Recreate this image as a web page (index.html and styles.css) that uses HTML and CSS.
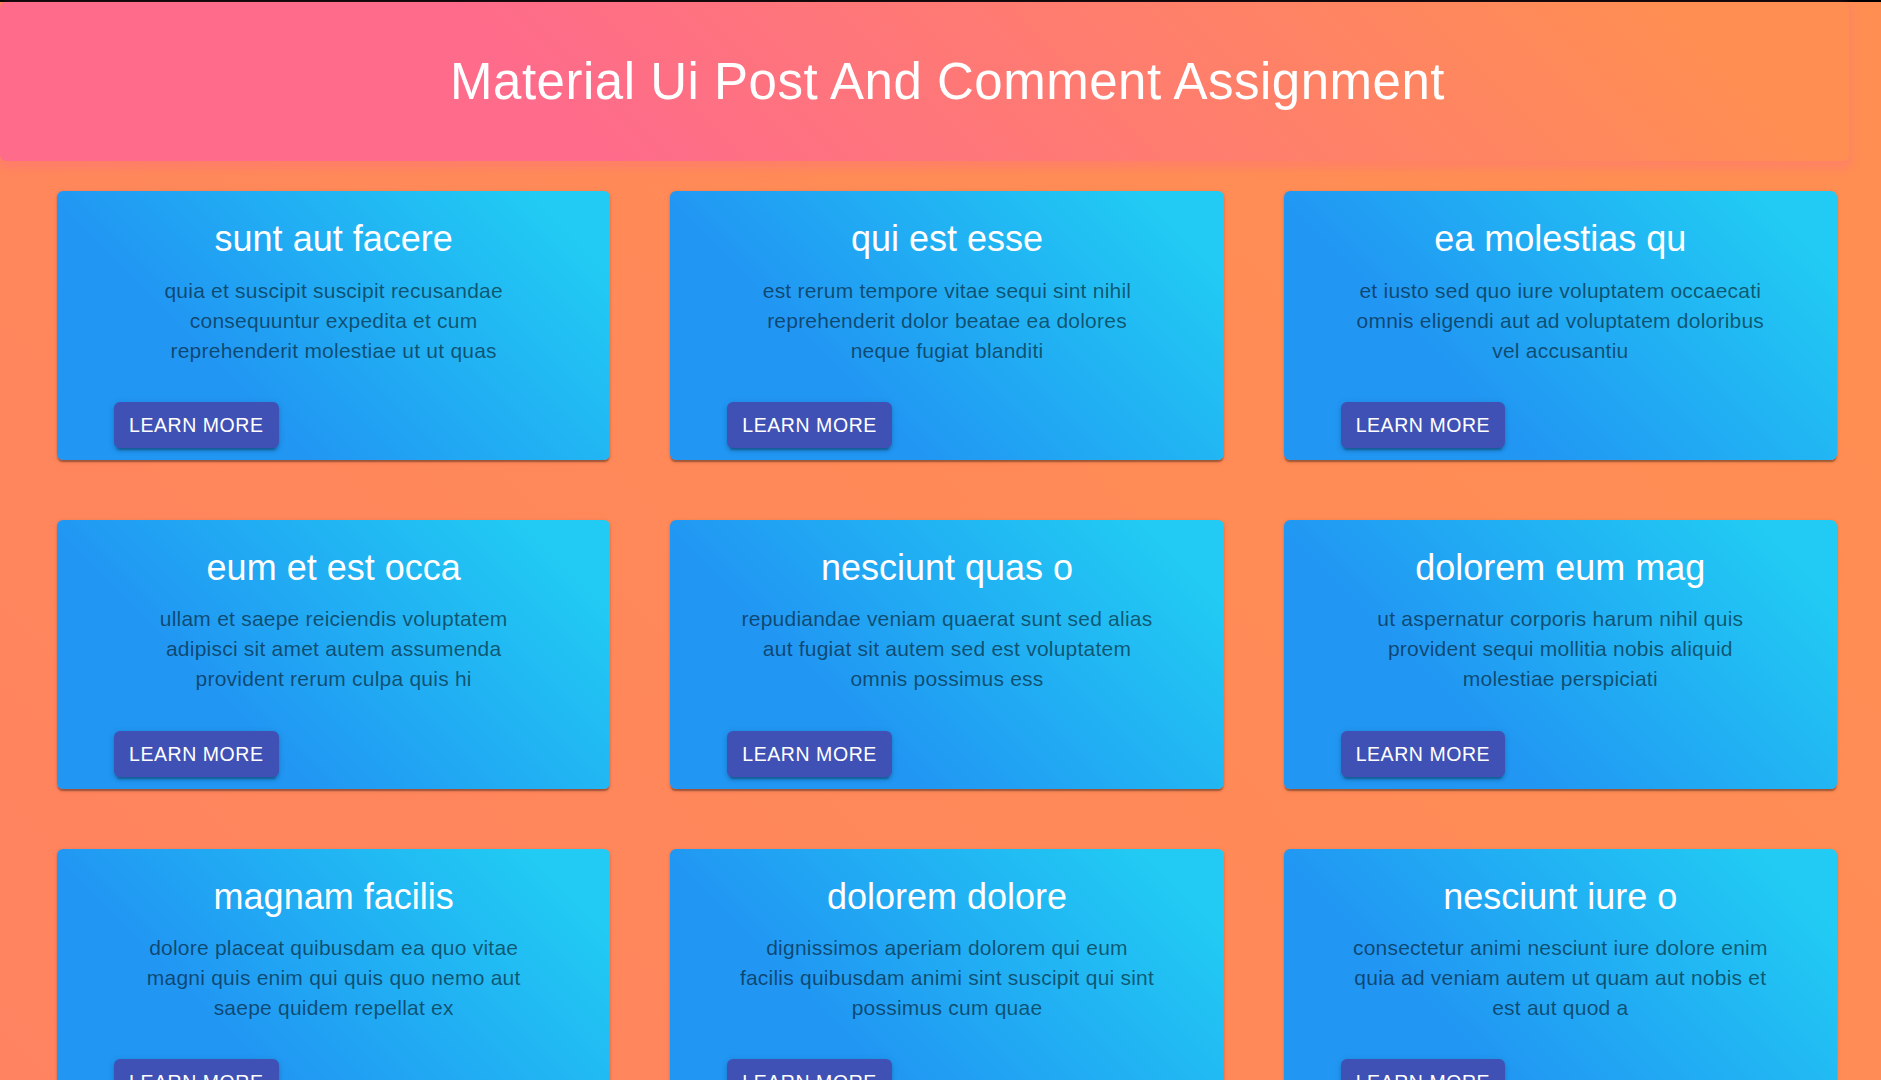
FILE: index.html
```html
<!DOCTYPE html>
<html lang="en">
<head>
<meta charset="utf-8">
<title>Material Ui Post And Comment Assignment</title>
<link rel="stylesheet" href="styles.css">
</head>
<body>
<div class="topline"></div>
<header class="header">
  <h1 class="header-title">Material Ui Post And Comment Assignment</h1>
</header>
<main class="main">
  <div class="grid">
    <div class="card">
      <div class="card-content">
        <h2 class="card-title">sunt aut facere</h2>
        <p class="card-body">quia et suscipit suscipit recusandae<br>consequuntur expedita et cum<br>reprehenderit molestiae ut ut quas</p>
      </div>
      <div class="card-actions"><button class="btn">Learn More</button></div>
    </div>
    <div class="card">
      <div class="card-content">
        <h2 class="card-title">qui est esse</h2>
        <p class="card-body">est rerum tempore vitae sequi sint nihil<br>reprehenderit dolor beatae ea dolores<br>neque fugiat blanditi</p>
      </div>
      <div class="card-actions"><button class="btn">Learn More</button></div>
    </div>
    <div class="card">
      <div class="card-content">
        <h2 class="card-title">ea molestias qu</h2>
        <p class="card-body">et iusto sed quo iure voluptatem occaecati<br>omnis eligendi aut ad voluptatem doloribus<br>vel accusantiu</p>
      </div>
      <div class="card-actions"><button class="btn">Learn More</button></div>
    </div>
    <div class="card">
      <div class="card-content">
        <h2 class="card-title">eum et est occa</h2>
        <p class="card-body">ullam et saepe reiciendis voluptatem<br>adipisci sit amet autem assumenda<br>provident rerum culpa quis hi</p>
      </div>
      <div class="card-actions"><button class="btn">Learn More</button></div>
    </div>
    <div class="card">
      <div class="card-content">
        <h2 class="card-title">nesciunt quas o</h2>
        <p class="card-body">repudiandae veniam quaerat sunt sed alias<br>aut fugiat sit autem sed est voluptatem<br>omnis possimus ess</p>
      </div>
      <div class="card-actions"><button class="btn">Learn More</button></div>
    </div>
    <div class="card">
      <div class="card-content">
        <h2 class="card-title">dolorem eum mag</h2>
        <p class="card-body">ut aspernatur corporis harum nihil quis<br>provident sequi mollitia nobis aliquid<br>molestiae perspiciati</p>
      </div>
      <div class="card-actions"><button class="btn">Learn More</button></div>
    </div>
    <div class="card">
      <div class="card-content">
        <h2 class="card-title">magnam facilis</h2>
        <p class="card-body">dolore placeat quibusdam ea quo vitae<br>magni quis enim qui quis quo nemo aut<br>saepe quidem repellat ex</p>
      </div>
      <div class="card-actions"><button class="btn">Learn More</button></div>
    </div>
    <div class="card">
      <div class="card-content">
        <h2 class="card-title">dolorem dolore</h2>
        <p class="card-body">dignissimos aperiam dolorem qui eum<br>facilis quibusdam animi sint suscipit qui sint<br>possimus cum quae</p>
      </div>
      <div class="card-actions"><button class="btn">Learn More</button></div>
    </div>
    <div class="card">
      <div class="card-content">
        <h2 class="card-title">nesciunt iure o</h2>
        <p class="card-body">consectetur animi nesciunt iure dolore enim<br>quia ad veniam autem ut quam aut nobis et<br>est aut quod a</p>
      </div>
      <div class="card-actions"><button class="btn">Learn More</button></div>
    </div>
  </div>
</main>
</body>
</html>
```
FILE: styles.css
```css
html {
  background: linear-gradient(45deg, #ff8360 0%, #ff8a58 50%, #ff8e53 85%) fixed;
  min-height: 100%;
}
body {
  margin: 0;
  font-family: "Liberation Sans", Arial, Helvetica, sans-serif;
  overflow-x: hidden;
}
.topline {
  height: 2px;
  background: #000;
}
.header {
  width: 1849px;
  box-sizing: border-box;
  padding: 48px 0 48px 46px;
  background: linear-gradient(45deg, #FE6B8B 30%, #FF8E53 90%);
  border-radius: 6px;
  box-shadow: 0 4.5px 7.5px 3px rgba(255, 105, 135, 0.3);
  position: relative;
  z-index: 1;
}
.header-title {
  margin: 0;
  text-align: center;
  color: #fff;
  font-weight: 400;
  font-size: 51px;
  line-height: 63px;
  letter-spacing: 0.01em;
}
.main {
  padding: 30px 0 60px 57px;
}
.grid {
  display: grid;
  grid-template-columns: repeat(3, 553.33px);
  column-gap: 60px;
  row-gap: 60px;
}
.card {
  background: linear-gradient(45deg, #2196F3 30%, #21CBF3 90%);
  border-radius: 6px;
  box-shadow: 0 3px 1.5px -1.5px rgba(0,0,0,0.2), 0 1.5px 1.5px 0 rgba(0,0,0,0.14), 0 1.5px 4.5px 0 rgba(0,0,0,0.12);
  overflow: hidden;
}
.card-content {
  padding: 24px;
  text-align: center;
}
.card-title {
  margin: 0 0 12.6px;
  color: #fff;
  font-weight: 400;
  font-size: 36px;
  line-height: 48px;
}
.card-body {
  margin: 0;
  color: rgba(0, 0, 0, 0.54);
  font-size: 21px;
  line-height: 30.03px;
  letter-spacing: 0.01071em;
  white-space: nowrap;
}
.card-actions {
  display: flex;
  align-items: center;
  padding: 12px;
}
.btn {
  margin-left: 45px;
  font-family: "Liberation Sans", Arial, Helvetica, sans-serif;
  font-size: 19.5px;
  font-weight: 500;
  line-height: 1.75;
  letter-spacing: 0.02857em;
  text-transform: uppercase;
  color: #fff;
  background: #3f51b5;
  border: 0;
  border-radius: 6px;
  padding: 6px 15px;
  box-shadow: 0 4.5px 1.5px -3px rgba(0,0,0,0.2), 0 3px 3px 0 rgba(0,0,0,0.14), 0 1.5px 7.5px 0 rgba(0,0,0,0.12);
  cursor: pointer;
}
```
